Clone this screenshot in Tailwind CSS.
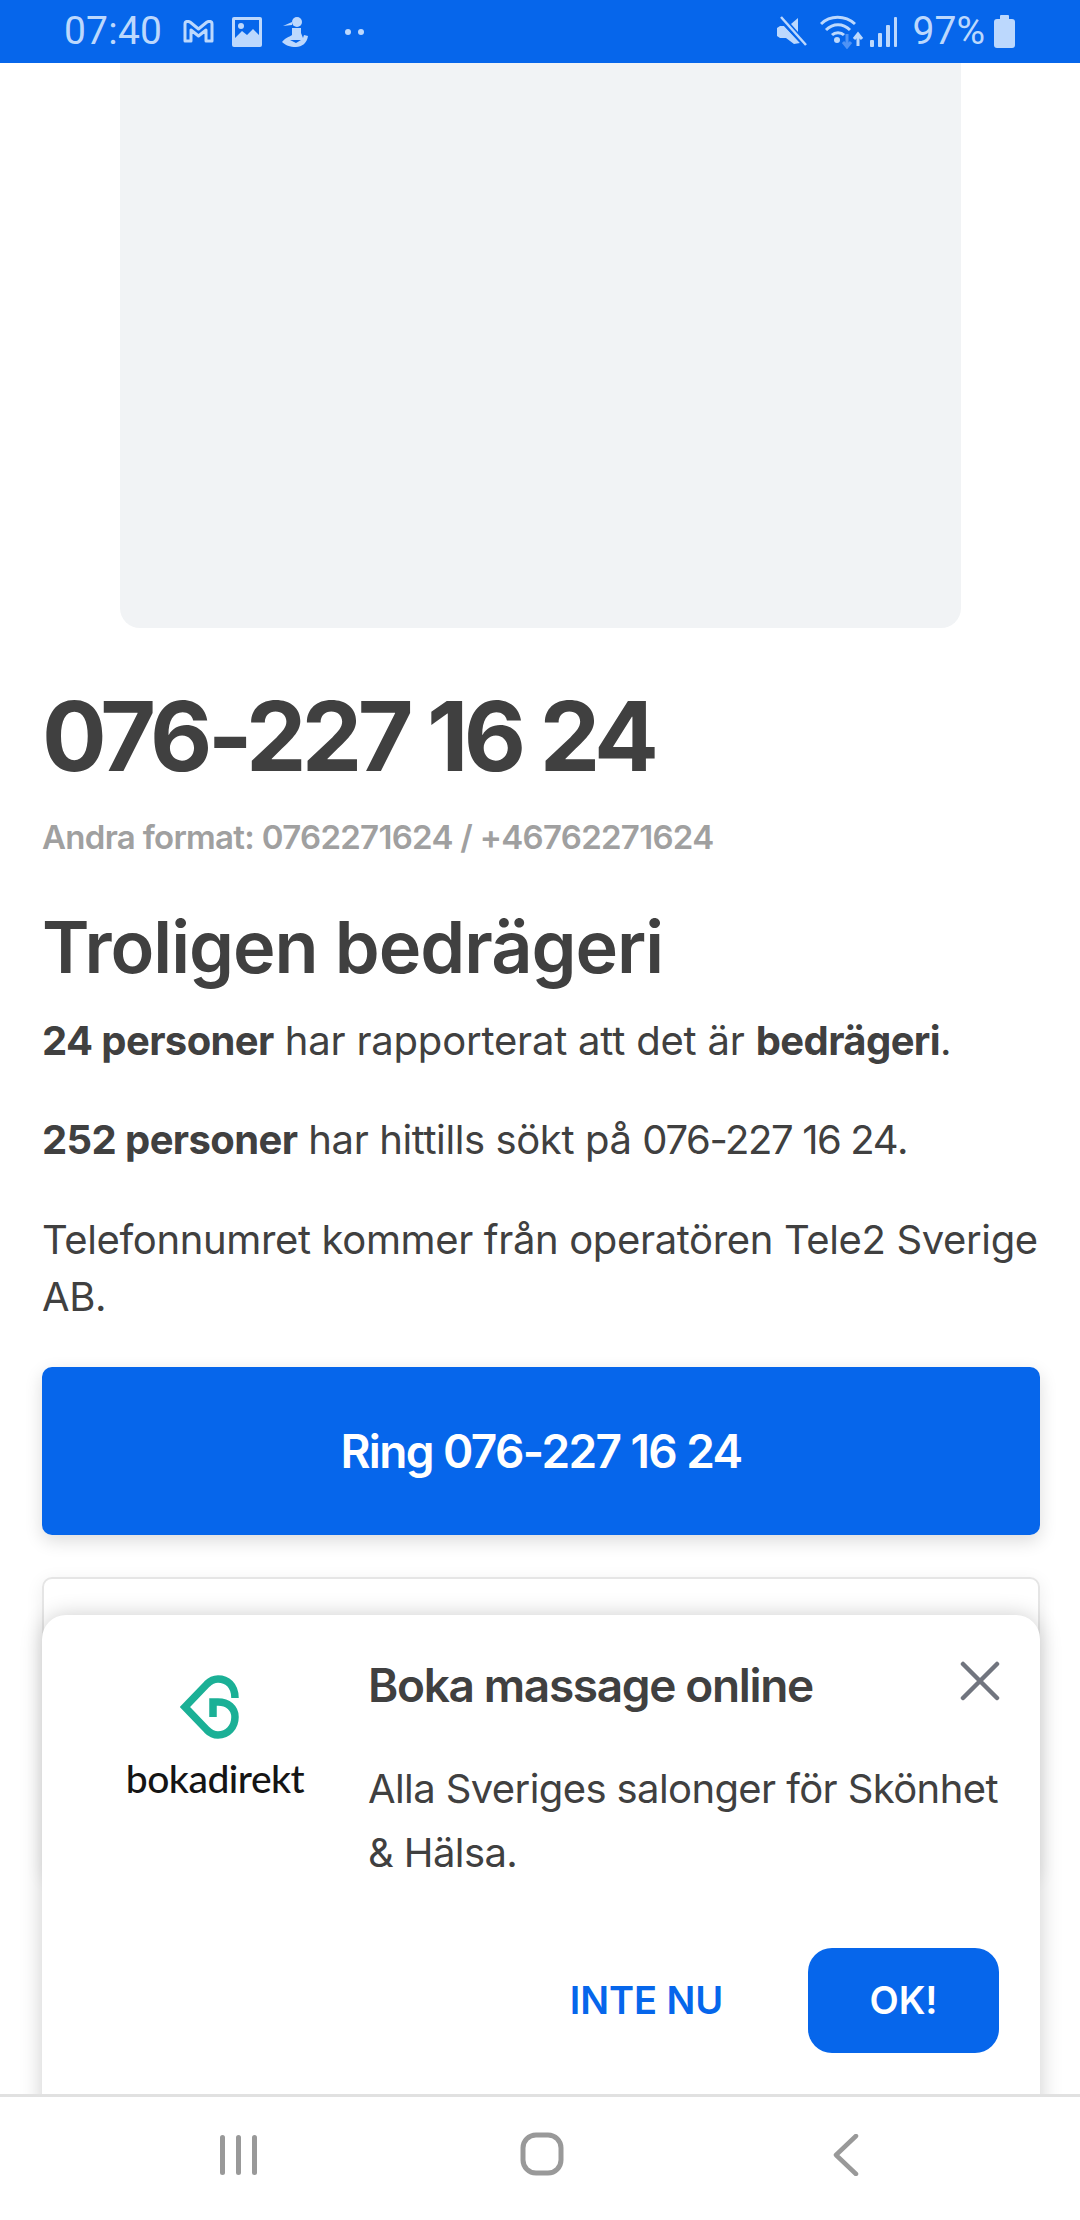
<!DOCTYPE html>
<html lang="sv">
<head>
  <meta charset="UTF-8">
  <title>076-227 16 24</title>
  <script src="https://cdn.jsdelivr.net/npm/@tailwindcss/browser@4"></script>
</head>
<body class="bg-white font-['Inter',sans-serif] text-[#404040]">
  <div class="relative w-[1080px] h-[2220px] overflow-hidden flex flex-col">

    <!-- status bar -->
    <div class="h-[63px] shrink-0 bg-[#0666eb] text-[#bcd8fd] flex items-center justify-between pl-[64px] pr-[65px] font-['Roboto',sans-serif] text-[39px]">
      <div class="flex items-center">
        <span class="tracking-[0.2px]">07:40</span>
        <svg class="ml-[21px]" width="31" height="23" viewBox="0 0 31 23" fill="none" stroke="#bcd8fd" stroke-width="3" stroke-linejoin="round"><path d="M2 4 C2 1 5 1 7 2 L15.5 9 L24 2 C26 1 29 1 29 4 V21 H23 V10 L15.5 16 L8 10 V21 H2 Z"/></svg>
        <svg class="ml-[18px]" width="30" height="30" viewBox="0 0 30 30"><rect width="30" height="30" rx="2" fill="#bcd8fd"/><rect x="3" y="3" width="24" height="21" fill="#0666eb"/><circle cx="9" cy="9" r="3" fill="#bcd8fd"/><path d="M3 21 L10 14 L15 18 L21 12 L27 18 V25 H3 Z" fill="#bcd8fd"/></svg>
        <svg class="ml-[20px]" width="26" height="32" viewBox="0 0 26 32" fill="#bcd8fd"><circle cx="15" cy="6" r="5"/><path d="M1 10 L10 6 V9 Z"/><path d="M10 12 H19 V17 L21 22 L22 19 L26 20 C25 27 20 31 14 31 C8 31 3 29 0 26 C3 22 7 21 10 19 Z"/><path d="M8 24 L19 24 L14 27 Z" fill="#0666eb"/></svg>
        <span class="ml-[37px] w-[6px] h-[6px] rounded-full bg-[#bcd8fd]"></span>
        <span class="ml-[7px] w-[6px] h-[6px] rounded-full bg-[#bcd8fd]"></span>
      </div>
      <div class="flex items-center">
        <svg width="30" height="32" viewBox="0 0 30 32"><path d="M0 12 L3 10 H7 L23 27 L17 28 L9 22 H3 L0 20 Z" fill="#bcd8fd"/><path d="M2 2 L28 30" stroke="#0666eb" stroke-width="3"/><path d="M4 1 L29 29" stroke="#bcd8fd" stroke-width="2.5"/><path d="M14 8 L21 2 V16 Z" fill="#bcd8fd"/></svg>
        <svg class="ml-[13px]" width="44" height="34" viewBox="0 0 44 34" fill="none"><path d="M1 9 C10 0 25 0 35 9 M6 15 C13 8 23 8 30 15 M12 20 C15 17 21 17 24 20" stroke="#bcd8fd" stroke-width="3"/><circle cx="17" cy="25" r="3" fill="#bcd8fd"/><path d="M27 19 V31 M23 27 L27 32 L31 27" stroke="#4f93f5" stroke-width="3"/><path d="M38 31 V21 M34 24 L38 19 L42 24" stroke="#bcd8fd" stroke-width="3"/></svg>
        <svg class="ml-[6px]" width="28" height="32" viewBox="0 0 28 32" fill="#bcd8fd"><rect x="0" y="24" width="4" height="7" rx="1"/><rect x="8" y="17" width="4" height="14" rx="1"/><rect x="16" y="9" width="4" height="22" rx="1"/><rect x="24" y="1" width="3" height="30" rx="1"/></svg>
        <span class="ml-[15px]">97%</span>
        <svg class="ml-[9px]" width="21" height="33" viewBox="0 0 21 33" fill="#bcd8fd"><rect x="6" y="0" width="9" height="5" rx="1"/><rect y="4" width="21" height="29" rx="3"/></svg>
      </div>
    </div>

    <!-- page content -->
    <div class="flex-1 min-h-0">
      <div class="mx-[120px] w-[841px] h-[565px] bg-[#f1f3f5] rounded-b-[20px]"></div>
      <div class="pl-[42px] pr-[40px]">
        <h1 class="mt-[58px] text-[96px] leading-[100px] font-bold tracking-[-4.6px]">076-227 16 24</h1>
        <p class="mt-[31px] text-[33px] leading-[40px] font-semibold text-[#a0a0a0] tracking-[-0.7px]">Andra format: 0762271624 / +46762271624</p>
        <h2 class="mt-[48px] text-[72px] leading-[84px] font-semibold tracking-[-1px]">Troligen bedrägeri</h2>
        <p class="mt-[23px] text-[40px] leading-[57px] tracking-[-0.2px]"><b class="font-bold tracking-[-0.6px]">24 personer</b> har rapporterat att det är <b class="font-bold tracking-[-0.6px]">bedrägeri</b>.</p>
        <p class="mt-[42px] text-[40px] leading-[57px] tracking-[-0.4px]"><b class="font-bold tracking-[-0.6px]">252 personer</b> har hittills sökt på <span class="tracking-[-1.4px]">076-227 16 24</span>.</p>
        <p class="mt-[43px] text-[40px] leading-[57px] tracking-[-0.36px]">Telefonnumret kommer från operatören Tele2 Sverige AB.</p>
        <button class="mt-[42px] w-full h-[168px] bg-[#0666eb] rounded-[10px] text-white text-[46px] font-semibold tracking-[-1.6px] shadow-[0_6px_18px_rgba(0,0,0,0.14)]">Ring 076-227 16 24</button>
        <div class="mt-[42px] h-[300px] rounded-[10px] border-2 border-[#e5e5e5] shadow-[0_4px_18px_rgba(0,0,0,0.08)]"></div>
      </div>
    </div>

    <!-- popup -->
    <div class="absolute left-[42px] top-[1615px] w-[998px] h-[520px] bg-white rounded-[24px] shadow-[0_0_22px_rgba(0,0,0,0.2)] flex">
      <div class="w-[326px] pl-[20px] pt-[60px] flex flex-col items-center shrink-0">
        <svg class="mr-[10px]" width="60" height="66" viewBox="0 0 60 66" fill="none" stroke="#1bb096" stroke-width="7.5">
          <path d="M55 23 C55 10 47 4 38 4 C33 4 30 6 27 9 L5 32 L27 55 C30 58 34 60 38 60 C48 60 55 52 55 42 C55 33 48 27 38 27 H33 V42"/>
        </svg>
        <span class="mt-[17px] text-[39px] leading-[40px] font-['Lato',sans-serif] font-medium text-[#151515] tracking-[-0.5px]">bokadirekt</span>
      </div>
      <div class="flex-1 min-w-0 pr-[41px] pt-[42px]">
        <div class="flex justify-between items-start">
          <h3 class="text-[46px] leading-[56px] font-semibold tracking-[-1.35px]">Boka massage online</h3>
          <svg class="mt-[4px] -mr-[1px]" width="40" height="40" viewBox="0 0 40 40" stroke="#71757f" stroke-width="4.5" stroke-linecap="round"><path d="M3 3 L37 37 M37 3 L3 37"/></svg>
        </div>
        <p class="mt-[44px] w-[640px] text-[40px] leading-[64px] tracking-[-0.6px]">Alla Sveriges salonger för Skönhet &amp; Hälsa.</p>
        <div class="mt-[63px] flex justify-end items-center">
          <span class="text-[#0666eb] text-[38px] font-semibold tracking-[-0.1px]">INTE NU</span>
          <button class="ml-[85px] w-[191px] h-[105px] bg-[#0666eb] rounded-[24px] text-white text-[38px] font-semibold">OK!</button>
        </div>
      </div>
    </div>

    <!-- navigation bar -->
    <div class="absolute left-0 bottom-0 w-full h-[126px] bg-white border-t-[3px] border-[#e1e1e1]">
      <svg class="absolute left-[218px] top-[37px]" width="42" height="42" viewBox="0 0 42 42" fill="#999"><rect x="2" y="1" width="5" height="40" rx="2.5"/><rect x="18" y="1" width="5" height="40" rx="2.5"/><rect x="34" y="1" width="5" height="40" rx="2.5"/></svg>
      <svg class="absolute left-[520px] top-[35px]" width="44" height="44" viewBox="0 0 44 44" fill="none" stroke="#999" stroke-width="5"><rect x="3" y="3" width="38" height="38" rx="13"/></svg>
      <svg class="absolute left-[832px] top-[37px]" width="28" height="42" viewBox="0 0 28 42" fill="none" stroke="#999" stroke-width="4.5" stroke-linecap="round" stroke-linejoin="round"><path d="M24 2 L4 21 L24 40"/></svg>
    </div>
  </div>
</body>
</html>
